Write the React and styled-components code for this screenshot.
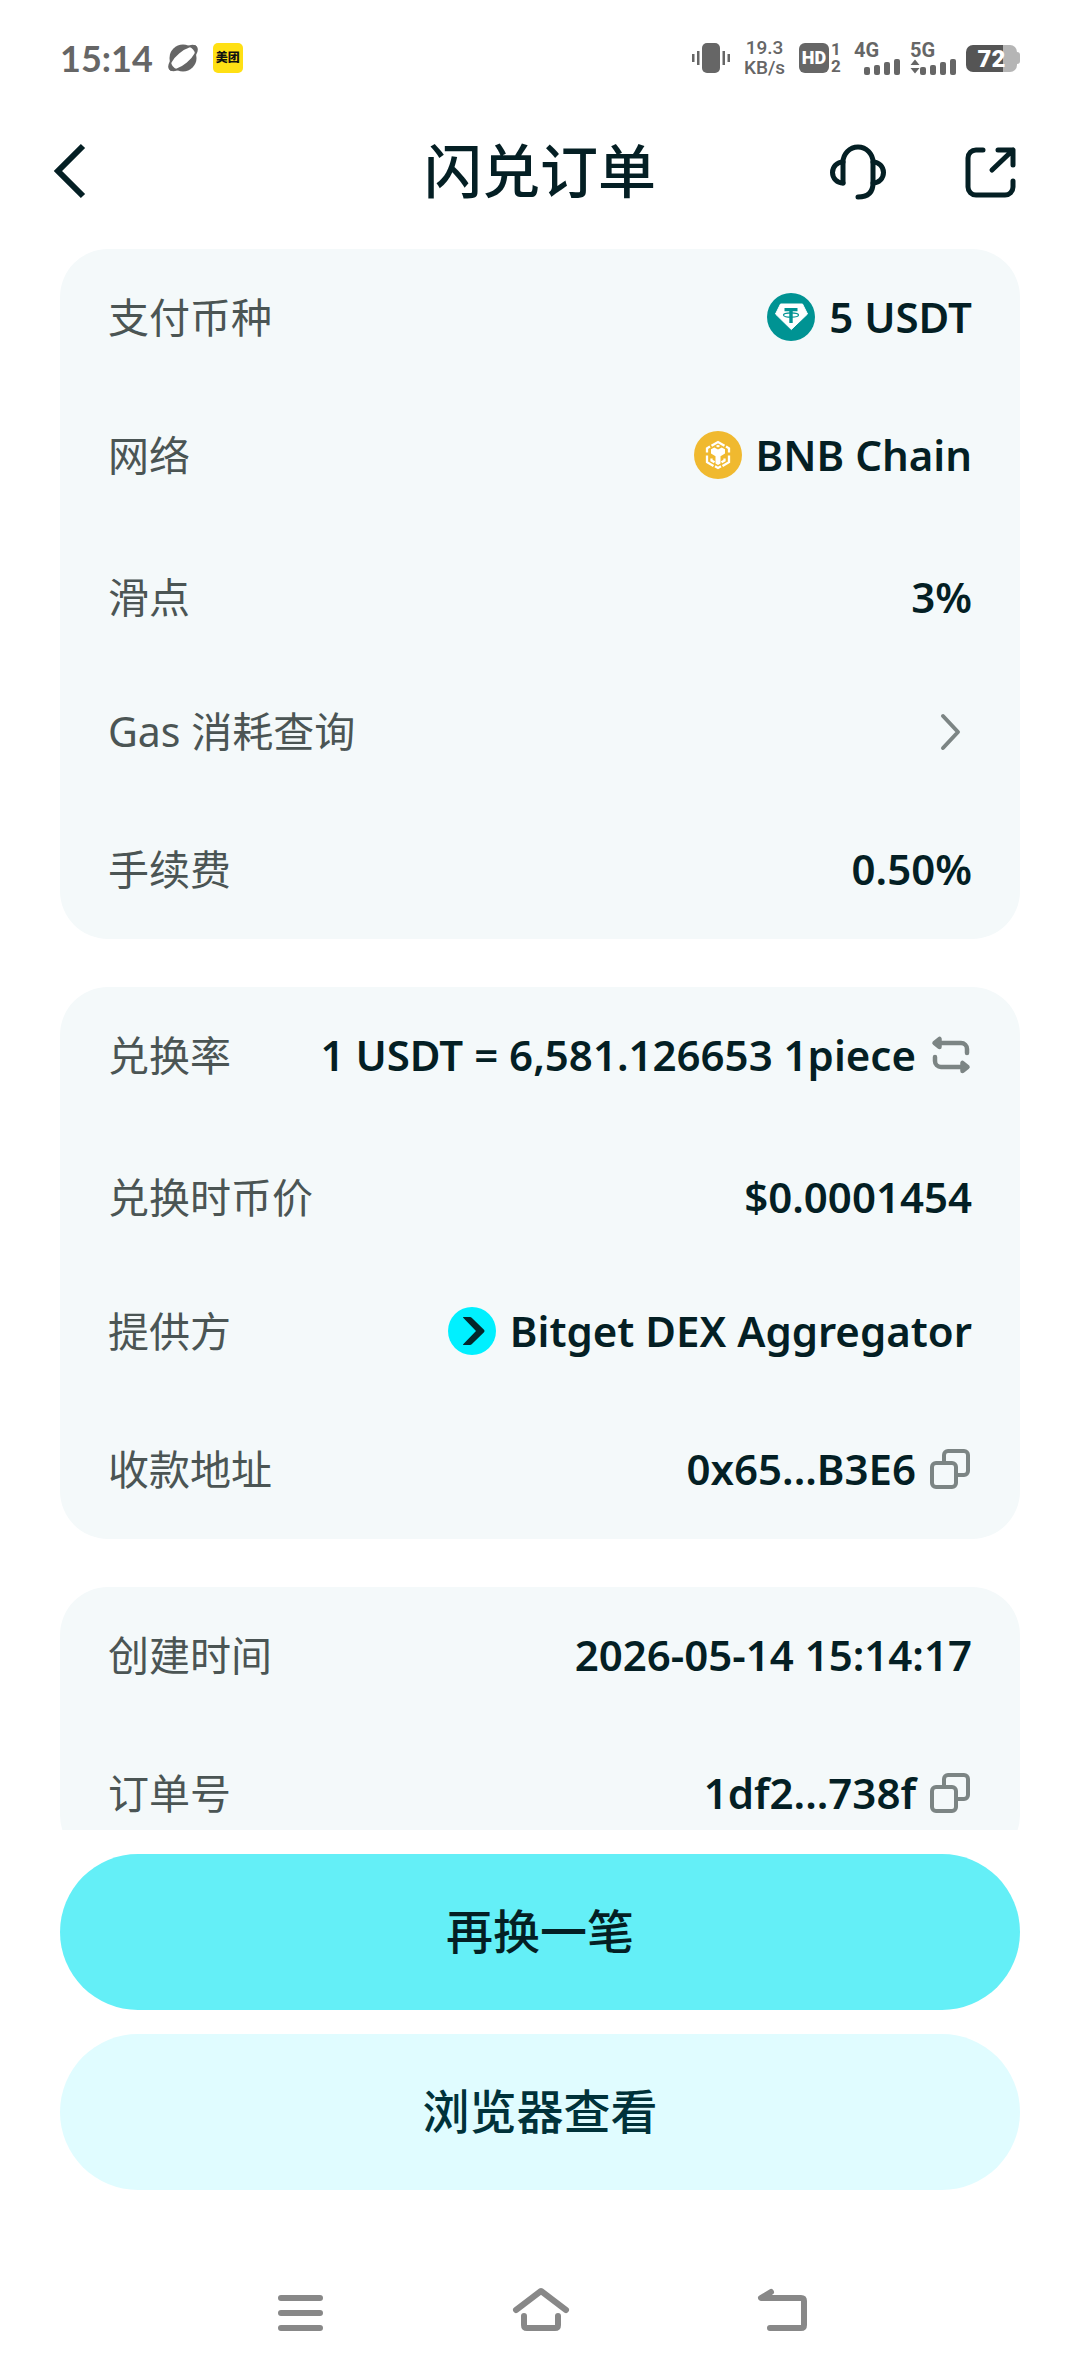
import React, { useState } from 'react';
import styled, { createGlobalStyle } from 'styled-components';

const GlobalStyle = createGlobalStyle`
    * {
        box-sizing: border-box;
        margin: 0;
        padding: 0;
    }

    body {
        background-color: #ffffff;
        color: #041f24;
        font-family: "Noto Sans", "Noto Sans CJK SC", sans-serif;
    }

    button {
        border: none;
        background: none;
        color: inherit;
        font-family: inherit;
        cursor: pointer;
    }

    svg {
        display: block;
        flex-shrink: 0;
    }
`;

const Screen = styled.div`
    height: 100vh;
    display: flex;
    flex-direction: column;
`;

const StatusBar = styled.div`
    height: 116px;
    padding: 0 60px;
    display: flex;
    align-items: center;
    justify-content: space-between;
    color: #666666;
`;

const StatusGroup = styled.div`
    display: flex;
    align-items: center;
    gap: ${({ $gap }) => $gap}px;
`;

const Clock = styled.span`
    font-family: Lato, sans-serif;
    font-size: 36px;
    font-weight: 700;
    line-height: 38px;
`;

const AppBadge = styled.span`
    width: 30px;
    height: 30px;
    border-radius: 5px;
    background-color: #ffe014;
    color: #111111;
    font-size: 12px;
    font-weight: 900;
    line-height: 30px;
    text-align: center;
`;

const NetSpeed = styled.div`
    width: 43px;
    display: flex;
    flex-direction: column;
    font-family: Roboto, sans-serif;
    font-weight: 500;
    font-size: 19px;
    line-height: 20px;
    text-align: center;
`;

const HdBadge = styled.span`
    width: 30px;
    height: 30px;
    border-radius: 6px;
    background-color: #666666;
    color: #ffffff;
    font-family: Roboto, sans-serif;
    font-size: 18px;
    font-weight: 900;
    line-height: 30px;
    text-align: center;
`;

const SimNumbers = styled.div`
    width: 10px;
    font-family: Roboto, sans-serif;
    font-size: 17px;
    font-weight: 700;
    line-height: 17px;
    text-align: center;
`;

const Signal = styled.div`
    width: 46px;
    height: 32px;
    display: flex;
    flex-direction: column;
    justify-content: space-between;
    font-family: Roboto, sans-serif;
    font-size: 20px;
    font-weight: 700;
    line-height: 16px;
`;

const SignalBars = styled.svg`
    align-self: flex-end;
`;

const Battery = styled.div`
    display: flex;
    align-items: center;
`;

const BatteryBody = styled.div`
    width: 51px;
    height: 27px;
    border-radius: 7px;
    background: linear-gradient(to right, #555555 72%, #b5b5b5 72%);
    color: #ffffff;
    font-family: Roboto, sans-serif;
    font-size: 24px;
    font-weight: 900;
    line-height: 28px;
    text-align: center;
`;

const BatteryTip = styled.div`
    width: 3px;
    height: 12px;
    border-radius: 0 3px 3px 0;
    background-color: #b5b5b5;
`;

const Header = styled.header`
    height: 110px;
    padding: 0 60px 0 40px;
    display: grid;
    grid-template-columns: 1fr auto 1fr;
    align-items: center;
`;

const Title = styled.h1`
    padding-left: 20px;
    font-size: 58px;
    font-weight: 500;
    line-height: 80px;
`;

const HeaderActions = styled.div`
    display: flex;
    justify-content: flex-end;
    gap: 72px;
`;

const IconButton = styled.button`
    display: flex;
    align-items: center;
`;

const Content = styled.main`
    flex: 1;
    min-height: 0;
    padding: 23px 60px 0;
    overflow-y: auto;
    scrollbar-width: none;
`;

const Card = styled.dl`
    margin-bottom: 48px;
    padding: 0 48px;
    border-radius: 48px;
    background-color: #f4f9fa;
`;

const Row = styled.div`
    height: 138px;
    padding-top: ${({ $low }) => ($low ? 8 : 0)}px;
    padding-bottom: 2px;
    display: flex;
    align-items: center;
    justify-content: space-between;
`;

const Label = styled.dt`
    color: #4b5554;
    font-size: 41px;
    line-height: 56px;
`;

const Value = styled.dd`
    display: flex;
    align-items: center;
    gap: 14px;
    font-size: 42px;
    font-weight: 600;
    line-height: 56px;
    white-space: nowrap;
`;

const Footer = styled.footer`
    padding: 24px 60px 60px;
    display: flex;
    flex-direction: column;
    gap: 24px;
`;

const ActionButton = styled.button`
    height: 156px;
    padding-bottom: 2px;
    border-radius: 78px;
    background-color: ${({ $primary }) => ($primary ? '#64eff7' : '#e0fcff')};
    color: ${({ $primary }) => ($primary ? '#041f24' : '#00323a')};
    font-size: 47px;
    font-weight: 500;
    line-height: 64px;
`;

const NavBar = styled.nav`
    height: 126px;
    padding: 0 180px;
    display: grid;
    grid-template-columns: repeat(3, 1fr);
    justify-items: center;
`;

function UsdtIcon() {
    return (
        <svg width="48" height="48" viewBox="0 0 48 48">
            <circle cx="24" cy="24" r="24" fill="#009393" />
            <path d="M13.500 11h22l5 10L24.300 36.500 8.500 21z" fill="#fff" stroke="#fff" strokeWidth="1" strokeLinejoin="round" />
            <path d="M17.500 15h13v3.200h-4.800V30h-3.400V18.200h-4.800z" fill="#009393" />
            <ellipse cx="24" cy="22" rx="7.500" ry="2.200" fill="none" stroke="#009393" strokeWidth="1.200" />
        </svg>
    );
}

function BnbIcon() {
    return (
        <svg width="48" height="48" viewBox="0 0 48 48">
            <circle cx="24" cy="24" r="24" fill="#f0b92f" />
            <g fill="none" stroke="#fff" strokeWidth="2.300">
                <path d="M17.500 14.800 24 11l6.500 3.800" />
                <path d="M13 21.500v-4.200l3-1.800M35 21.500v-4.200l-3-1.800" />
                <path d="M13 24.500v6.700l6.500 3.700M35 24.500v6.700l-6.500 3.700" />
                <path d="M21 35.200 24 37l3-1.800" />
                <path d="M17.500 27.500v2l3 1.800M30.500 27.500v2l-3 1.800" />
            </g>
            <path d="M17 18.300l3.300-1.900L24 18.500l3.700-2.100 3.300 1.900v4.200l-4.500 2.700v7.200L24 33.900l-2.500-1.500v-7.200L17 22.500z" fill="#fff" />
            <path d="M24 13.800l2.200 1.300-2.200 1.300-2.200-1.300z" fill="#fff" />
        </svg>
    );
}

function BitgetIcon() {
    return (
        <svg width="48" height="48" viewBox="0 0 48 48">
            <circle cx="24" cy="24" r="24" fill="#00f0ff" />
            <path d="M15.500 10H22q1 0 1.700.7L36 22.800q1.200 1.200 0 2.400L23.700 37.300q-.7.700-1.700.7h-6.500q-1 0-.3-.8L28 24 15.200 10.800q-.7-.8.3-.8z" fill="#04262b" />
        </svg>
    );
}

function ChevronIcon() {
    return (
        <svg width="48" height="48" viewBox="0 0 48 48" fill="none" stroke="#7c8584" strokeWidth="4" strokeLinecap="round" strokeLinejoin="round">
            <path d="M19 9l15 16-15 16" />
        </svg>
    );
}

function SwapIcon() {
    return (
        <svg width="42" height="42" viewBox="0 0 42 42" fill="none" stroke="#7c8584" strokeWidth="4.500" strokeLinecap="round" strokeLinejoin="round">
            <path d="M11 9h20a6 6 0 0 1 6 6v4M5 23v4a6 6 0 0 0 6 6h20" />
            <path d="M4.500 9l5-4v8zM37.500 33l-5-4v8z" fill="#7c8584" />
        </svg>
    );
}

function CopyIcon() {
    return (
        <svg width="42" height="42" viewBox="0 0 42 42" fill="none" stroke="#7c8584" strokeWidth="4">
            <rect x="2" y="15" width="24" height="24" rx="4" />
            <path d="M14 15V7a4 4 0 0 1 4-4h16a4 4 0 0 1 4 4v16a4 4 0 0 1-4 4h-8" />
        </svg>
    );
}

function Bars({ data }) {
    return (
        <SignalBars width={data ? 46 : 36} height="17" viewBox={data ? '-10 0 46 17' : '0 0 36 17'} fill="#666">
            {data && <path d="M-9.500 7l4.500-5.500L-.5 7zM-9.500 10h9L-5 15.500z" />}
            <rect x="0" y="9" width="6" height="8" rx="2" />
            <rect x="10" y="7" width="6" height="10" rx="2" />
            <rect x="20" y="4" width="6" height="13" rx="2" />
            <rect x="30" y="1" width="6" height="16" rx="2" />
        </SignalBars>
    );
}

export default function App() {
    const [reversed, setReversed] = useState(false);

    return (
        <Screen>
            <GlobalStyle />
            <StatusBar>
                <StatusGroup $gap={15}>
                    <Clock>15:14</Clock>
                    <svg width="30" height="30" viewBox="0 0 30 30">
                        <circle cx="15" cy="15" r="13.500" fill="#666" />
                        <ellipse cx="15" cy="15" rx="17" ry="7" transform="rotate(-40 15 15)" fill="#fff" stroke="#666" strokeWidth="2" />
                        <path d="M21 3.500l6-1.500q3 1.500 1.500 7l-1.500 2q-.5-5-6-7.500zM9 26.500l-6 1.500q-3-1.500-1.500-7l1.500-2q.5 5 6 7.500z" fill="#666" />
                    </svg>
                    <AppBadge>美团</AppBadge>
                </StatusGroup>
                <StatusGroup $gap={13}>
                    <svg width="38" height="30" viewBox="0 0 38 30" fill="#666">
                        <rect x="10" y="0" width="18" height="30" rx="5" />
                        <path d="M0 11h2.500v8H0zM5 8h2.500v14H5zM30.500 8H33v14h-2.500zM35.500 11H38v8h-2.500z" />
                    </svg>
                    <NetSpeed>
                        <span>19.3</span>
                        <span>KB/s</span>
                    </NetSpeed>
                    <StatusGroup $gap={2}>
                        <HdBadge>HD</HdBadge>
                        <SimNumbers>1<br />2</SimNumbers>
                    </StatusGroup>
                    <StatusGroup $gap={10}>
                        <Signal>4G<Bars /></Signal>
                        <Signal>5G<Bars data /></Signal>
                        <Battery>
                            <BatteryBody>72</BatteryBody>
                            <BatteryTip />
                        </Battery>
                    </StatusGroup>
                </StatusGroup>
            </StatusBar>

            <Header>
                <IconButton aria-label="返回">
                    <svg width="60" height="60" viewBox="0 0 60 60" fill="none" stroke="#041f24" strokeWidth="6">
                        <path d="M43 5L18 30l25 25" />
                    </svg>
                </IconButton>
                <Title>闪兑订单</Title>
                <HeaderActions>
                    <IconButton aria-label="客服">
                        <svg width="60" height="60" viewBox="0 0 60 60" fill="none" stroke="#041f24" strokeWidth="5" strokeLinecap="round" strokeLinejoin="round">
                            <path d="M15 42V21a15 15 0 0 1 30 0v21q0 14-15 14" />
                            <path d="M15 21a10.500 10.500 0 0 0 0 21M45 21a10.500 10.500 0 0 1 0 21" />
                        </svg>
                    </IconButton>
                    <IconButton aria-label="分享">
                        <svg width="60" height="60" viewBox="0 0 60 60" fill="none" stroke="#041f24" strokeWidth="5" strokeLinecap="round" strokeLinejoin="round">
                            <path d="M23 9h-7a8 8 0 0 0-8 8v29a8 8 0 0 0 8 8h29a8 8 0 0 0 8-8v-6" />
                            <path d="M38 9h15v15M53 9L32 29" />
                        </svg>
                    </IconButton>
                </HeaderActions>
            </Header>

            <Content>
                <Card>
                    <Row>
                        <Label>支付币种</Label>
                        <Value><UsdtIcon />5 USDT</Value>
                    </Row>
                    <Row>
                        <Label>网络</Label>
                        <Value><BnbIcon />BNB Chain</Value>
                    </Row>
                    <Row $low>
                        <Label>滑点</Label>
                        <Value>3%</Value>
                    </Row>
                    <Row>
                        <Label>Gas 消耗查询</Label>
                        <Value>
                            <IconButton aria-label="Gas 消耗查询"><ChevronIcon /></IconButton>
                        </Value>
                    </Row>
                    <Row>
                        <Label>手续费</Label>
                        <Value>0.50%</Value>
                    </Row>
                </Card>

                <Card>
                    <Row>
                        <Label>兑换率</Label>
                        <Value>
                            {reversed ? '1 1piece = 0.00015195 USDT' : '1 USDT = 6,581.126653 1piece'}
                            <IconButton aria-label="切换" onClick={() => setReversed(!reversed)}><SwapIcon /></IconButton>
                        </Value>
                    </Row>
                    <Row $low>
                        <Label>兑换时币价</Label>
                        <Value>$0.0001454</Value>
                    </Row>
                    <Row>
                        <Label>提供方</Label>
                        <Value><BitgetIcon />Bitget DEX Aggregator</Value>
                    </Row>
                    <Row>
                        <Label>收款地址</Label>
                        <Value>
                            0x65...B3E6
                            <IconButton aria-label="复制收款地址"><CopyIcon /></IconButton>
                        </Value>
                    </Row>
                </Card>

                <Card>
                    <Row>
                        <Label>创建时间</Label>
                        <Value>2026-05-14 15:14:17</Value>
                    </Row>
                    <Row>
                        <Label>订单号</Label>
                        <Value>
                            1df2...738f
                            <IconButton aria-label="复制订单号"><CopyIcon /></IconButton>
                        </Value>
                    </Row>
                </Card>
            </Content>

            <Footer>
                <ActionButton $primary>再换一笔</ActionButton>
                <ActionButton>浏览器查看</ActionButton>
            </Footer>

            <NavBar>
                <IconButton aria-label="最近任务">
                    <svg width="60" height="60" viewBox="0 0 60 60" fill="none" stroke="#888" strokeWidth="6" strokeLinecap="round">
                        <path d="M11 15h39M11 30h39M11 45h39" />
                    </svg>
                </IconButton>
                <IconButton aria-label="主屏幕">
                    <svg width="60" height="60" viewBox="0 0 60 60" fill="none" stroke="#888" strokeWidth="6" strokeLinecap="round" strokeLinejoin="round">
                        <path d="M6 27L31 8l25 19M14 33v9q0 3 3 3h28q3 0 3-3v-9" />
                    </svg>
                </IconButton>
                <IconButton aria-label="返回上一级">
                    <svg width="60" height="60" viewBox="0 0 60 60" fill="none" stroke="#888" strokeWidth="6" strokeLinecap="round" strokeLinejoin="round">
                        <path d="M21 9l-10 6h40q3 0 3 3v24q0 3-3 3H20" />
                    </svg>
                </IconButton>
            </NavBar>
        </Screen>
    );
}
